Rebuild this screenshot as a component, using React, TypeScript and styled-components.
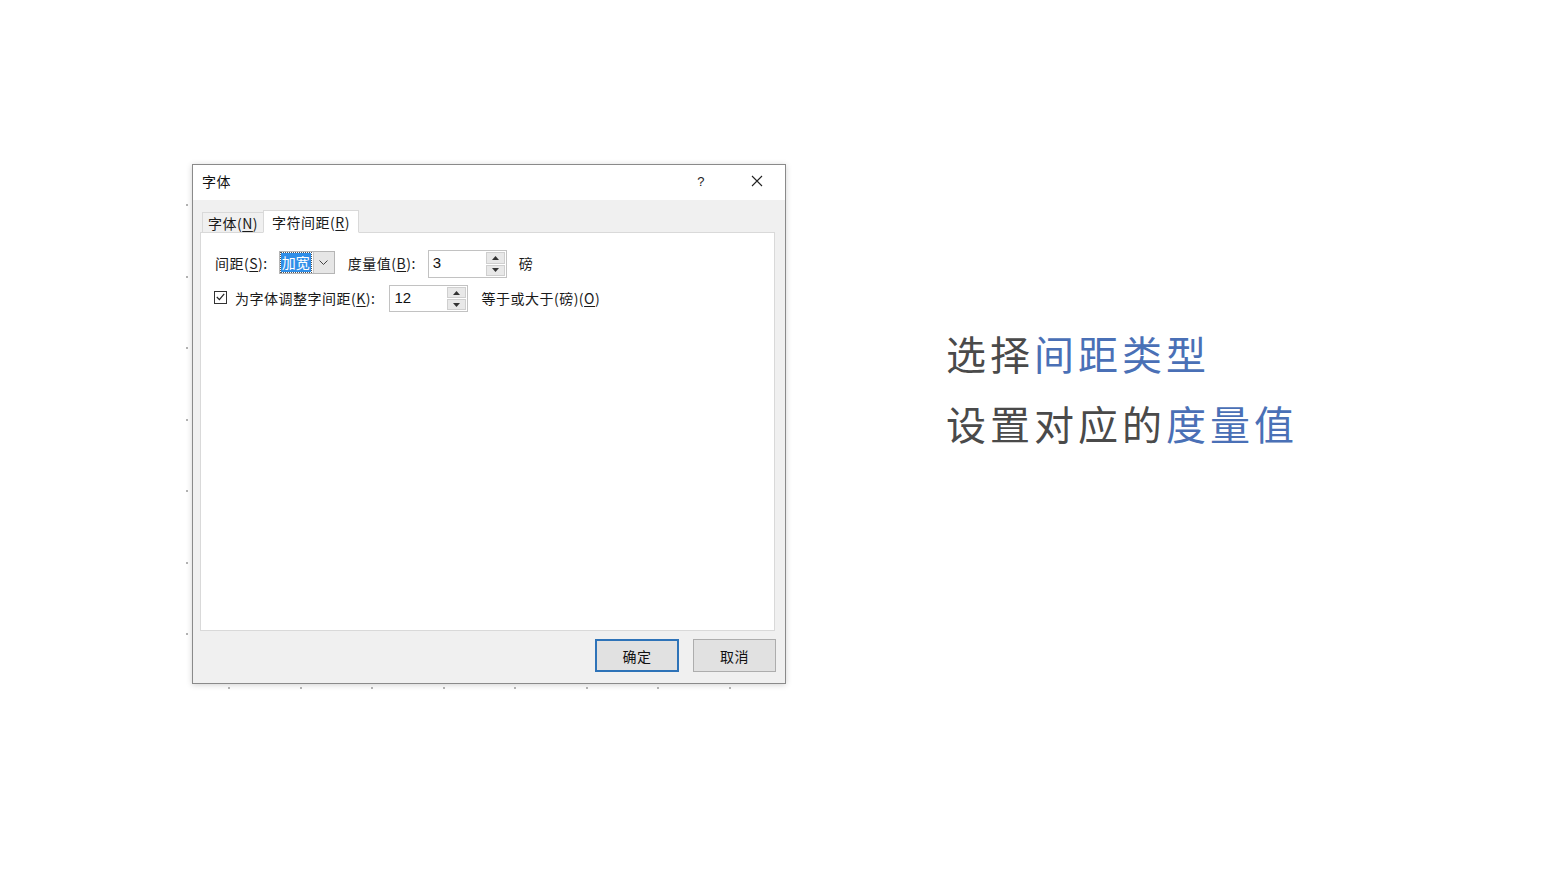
import React from "react";
import styled, { createGlobalStyle } from "styled-components";

const Global = createGlobalStyle`
  html, body { margin: 0; padding: 0; background: #ffffff; }
  body { font-family: "Noto Sans CJK SC", "Noto Sans", sans-serif; }
`;

const Page = styled.div`
  width: 1560px;
  height: 878px;
  display: flex;
  align-items: flex-start;
  padding: 164px 0 0 182px;
  box-sizing: border-box;
  overflow: hidden;
`;

const Stage = styled.div`
  display: grid;
  grid-template-columns: 10px 594px;
  grid-template-rows: 520px 8px;
`;

const DotColumn = styled.div`
  display: flex;
  flex-direction: column;
  align-items: center;
  padding-top: 40px;
  gap: 69.5px;
`;

const DotRow = styled.div`
  grid-column: 2;
  display: flex;
  align-items: center;
  padding-left: 36px;
  gap: 69.5px;
`;

const Dot = styled.span`
  width: 2px;
  height: 2px;
  background: #9a9a9a;
  border-radius: 1px;
  flex: none;
`;

const Dialog = styled.div`
  width: 594px;
  height: 520px;
  box-sizing: border-box;
  border: 1px solid #8a8a8a;
  box-shadow: 0 1px 6px rgba(0, 0, 0, 0.18);
  display: flex;
  flex-direction: column;
  font-family: "Noto Sans CJK SC", "Noto Sans", sans-serif;
  font-size: 14px;
  letter-spacing: 0.5px;
  color: #1a1a1a;
`;

const TitleBar = styled.div`
  height: 35px;
  flex: none;
  background: #ffffff;
  display: flex;
  align-items: center;
  padding-left: 9px;
  padding-bottom: 3px;
  box-sizing: border-box;
`;

const Title = styled.div`
  flex: 1;
  font-size: 14px;
  color: #111;
`;

const TitleButton = styled.div`
  width: 56px;
  height: 32px;
  display: flex;
  align-items: center;
  justify-content: center;
  color: #222;
  font-size: 13px;
  font-family: "Liberation Sans", sans-serif;
`;

const Body = styled.div`
  flex: 1;
  background: #f0f0f0;
  display: flex;
  flex-direction: column;
  padding: 10px 10px 11px 7px;
`;

const TabStrip = styled.div`
  display: flex;
  align-items: flex-end;
  padding-left: 2px;
  height: 23px;
  margin-bottom: -1px;
  position: relative;
  z-index: 1;
`;

const Tab = styled.div<{ $active?: boolean }>`
  box-sizing: border-box;
  height: ${(p) => (p.$active ? "23px" : "21px")};
  padding: 0 ${(p) => (p.$active ? "8px" : "5px")};
  display: flex;
  align-items: center;
  font-size: 14px;
  color: #1a1a1a;
  background: ${(p) => (p.$active ? "#ffffff" : "#f0f0f0")};
  border: 1px solid #d9d9d9;
  border-bottom: ${(p) => (p.$active ? "1px solid #ffffff" : "1px solid #d9d9d9")};
  ${(p) => (p.$active ? "" : "border-right: none;")}
`;

const U = styled.span`
  text-decoration: underline;
  text-underline-offset: 2px;
`;

const Panel = styled.div`
  height: 399px;
  box-sizing: border-box;
  background: #ffffff;
  border: 1px solid #d9d9d9;
  padding: 17px 14px;
  display: flex;
  flex-direction: column;
  gap: 7px;
`;

const Row = styled.div`
  display: flex;
  align-items: center;
`;

const Label = styled.span<{ $ml?: number }>`
  font-size: 14px;
  white-space: nowrap;
  margin-left: ${(p) => p.$ml ?? 0}px;
  margin-top: -2px;
  color: #1a1a1a;
`;

const Combo = styled.div`
  width: 56px;
  height: 23px;
  box-sizing: border-box;
  border: 1px solid #b5b5b5;
  background: #ffffff;
  display: flex;
  align-items: stretch;
  margin-left: 11px;
  margin-right: 13px;
  margin-top: -3px;
`;

const ComboValue = styled.div`
  flex: 1;
  display: flex;
  align-items: center;
  padding: 1px;
`;

const Selection = styled.span`
  background: #2f8ee8;
  color: #ffffff;
  font-size: 14px;
  letter-spacing: 0;
  line-height: 19px;
  padding: 0 1px;
  outline: 1px dotted #555;
`;

const ComboArrow = styled.div`
  width: 20px;
  background: #e6e6e6;
  border-left: 1px solid #c8c8c8;
  display: flex;
  align-items: center;
  justify-content: center;
`;

const Spin = styled.div<{ $h: number; $ml: number }>`
  width: 79px;
  height: ${(p) => p.$h}px;
  box-sizing: border-box;
  border: 1px solid #c2c2c2;
  background: #ffffff;
  display: flex;
  margin-left: ${(p) => p.$ml}px;
  margin-right: 12px;
`;

const SpinText = styled.div`
  flex: 1;
  padding-left: 4px;
  padding-bottom: 3px;
  display: flex;
  align-items: center;
  font-family: "Liberation Sans", "Noto Sans", sans-serif;
  font-size: 15px;
  letter-spacing: 0;
  color: #111;
`;

const SpinButtons = styled.div`
  width: 19px;
  display: flex;
  flex-direction: column;
  padding: 1px 1px 1px 0;
  gap: 1px;
`;

const SpinButton = styled.div`
  flex: 1;
  background: #e8e8e8;
  border: 1px solid #cfcfcf;
  display: flex;
  align-items: center;
  justify-content: center;
`;

const Check = styled.div`
  width: 13px;
  height: 13px;
  box-sizing: border-box;
  border: 1px solid #333;
  display: flex;
  align-items: center;
  justify-content: center;
  margin-left: -1px;
  margin-right: 8px;
  margin-top: -3px;
`;

const Footer = styled.div`
  display: flex;
  justify-content: flex-end;
  gap: 14px;
  margin-top: 8px;
  margin-right: -1px;
`;

const Button = styled.div<{ $primary?: boolean }>`
  width: ${(p) => (p.$primary ? 84 : 83)}px;
  height: 33px;
  box-sizing: border-box;
  border: ${(p) => (p.$primary ? "2px solid #2e73b8" : "1px solid #adadad")};
  background: #e1e1e1;
  display: flex;
  align-items: center;
  justify-content: center;
  font-size: 14px;
  color: #111;
`;

const Caption = styled.div`
  margin-left: 160px;
  margin-top: 154px;
  font-family: "Noto Sans CJK SC", "Noto Sans", sans-serif;
  font-size: 40px;
  line-height: 70px;
  letter-spacing: 4px;
  color: #4a4a4a;
`;

const Line = styled.div``;

const Blue = styled.span`
  color: #4a70b6;
`;

const Triangle = ({ up }: { up?: boolean }) => (
  <svg width="7" height="4" viewBox="0 0 7 4">
    <path d={up ? "M0 4 L3.5 0 L7 4 Z" : "M0 0 L3.5 4 L7 0 Z"} fill="#333" />
  </svg>
);

const SpinBox = ({ value, h, ml }: { value: string; h: number; ml: number }) => (
  <Spin $h={h} $ml={ml}>
    <SpinText>{value}</SpinText>
    <SpinButtons>
      <SpinButton>
        <Triangle up />
      </SpinButton>
      <SpinButton>
        <Triangle />
      </SpinButton>
    </SpinButtons>
  </Spin>
);

export default function App() {
  return (
    <>
      <Global />
      <Page>
        <Stage>
          <DotColumn>
            {Array.from({ length: 7 }).map((_, i) => (
              <Dot key={i} />
            ))}
          </DotColumn>
          <Dialog>
            <TitleBar>
              <Title>字体</Title>
              <TitleButton>?</TitleButton>
              <TitleButton>
                <svg width="12" height="12" viewBox="0 0 12 12">
                  <path d="M1 1 L11 11 M11 1 L1 11" stroke="#222" strokeWidth="1.1" />
                </svg>
              </TitleButton>
            </TitleBar>
            <Body>
              <TabStrip>
                <Tab>
                  字体(<U>N</U>)
                </Tab>
                <Tab $active>
                  字符间距(<U>R</U>)
                </Tab>
              </TabStrip>
              <Panel>
                <Row>
                  <Label>
                    间距(<U>S</U>):
                  </Label>
                  <Combo>
                    <ComboValue>
                      <Selection>加宽</Selection>
                    </ComboValue>
                    <ComboArrow>
                      <svg width="9" height="5" viewBox="0 0 9 5">
                        <path d="M0.5 0.5 L4.5 4.5 L8.5 0.5" stroke="#444" strokeWidth="1" fill="none" />
                      </svg>
                    </ComboArrow>
                  </Combo>
                  <Label>
                    度量值(<U>B</U>):
                  </Label>
                  <SpinBox value="3" h={28} ml={12} />
                  <Label>磅</Label>
                </Row>
                <Row>
                  <Check>
                    <svg width="9" height="8" viewBox="0 0 9 8">
                      <path d="M0.8 4 L3.4 6.6 L8.2 0.8" stroke="#222" strokeWidth="1.2" fill="none" />
                    </svg>
                  </Check>
                  <Label>
                    为字体调整字间距(<U>K</U>):
                  </Label>
                  <SpinBox value="12" h={27} ml={14} />
                  <Label $ml={1}>
                    等于或大于(磅)(<U>O</U>)
                  </Label>
                </Row>
              </Panel>
              <Footer>
                <Button $primary>确定</Button>
                <Button>取消</Button>
              </Footer>
            </Body>
          </Dialog>
          <DotRow>
            {Array.from({ length: 8 }).map((_, i) => (
              <Dot key={i} />
            ))}
          </DotRow>
        </Stage>
        <Caption>
          <Line>
            选择<Blue>间距类型</Blue>
          </Line>
          <Line>
            设置对应的<Blue>度量值</Blue>
          </Line>
        </Caption>
      </Page>
    </>
  );
}
